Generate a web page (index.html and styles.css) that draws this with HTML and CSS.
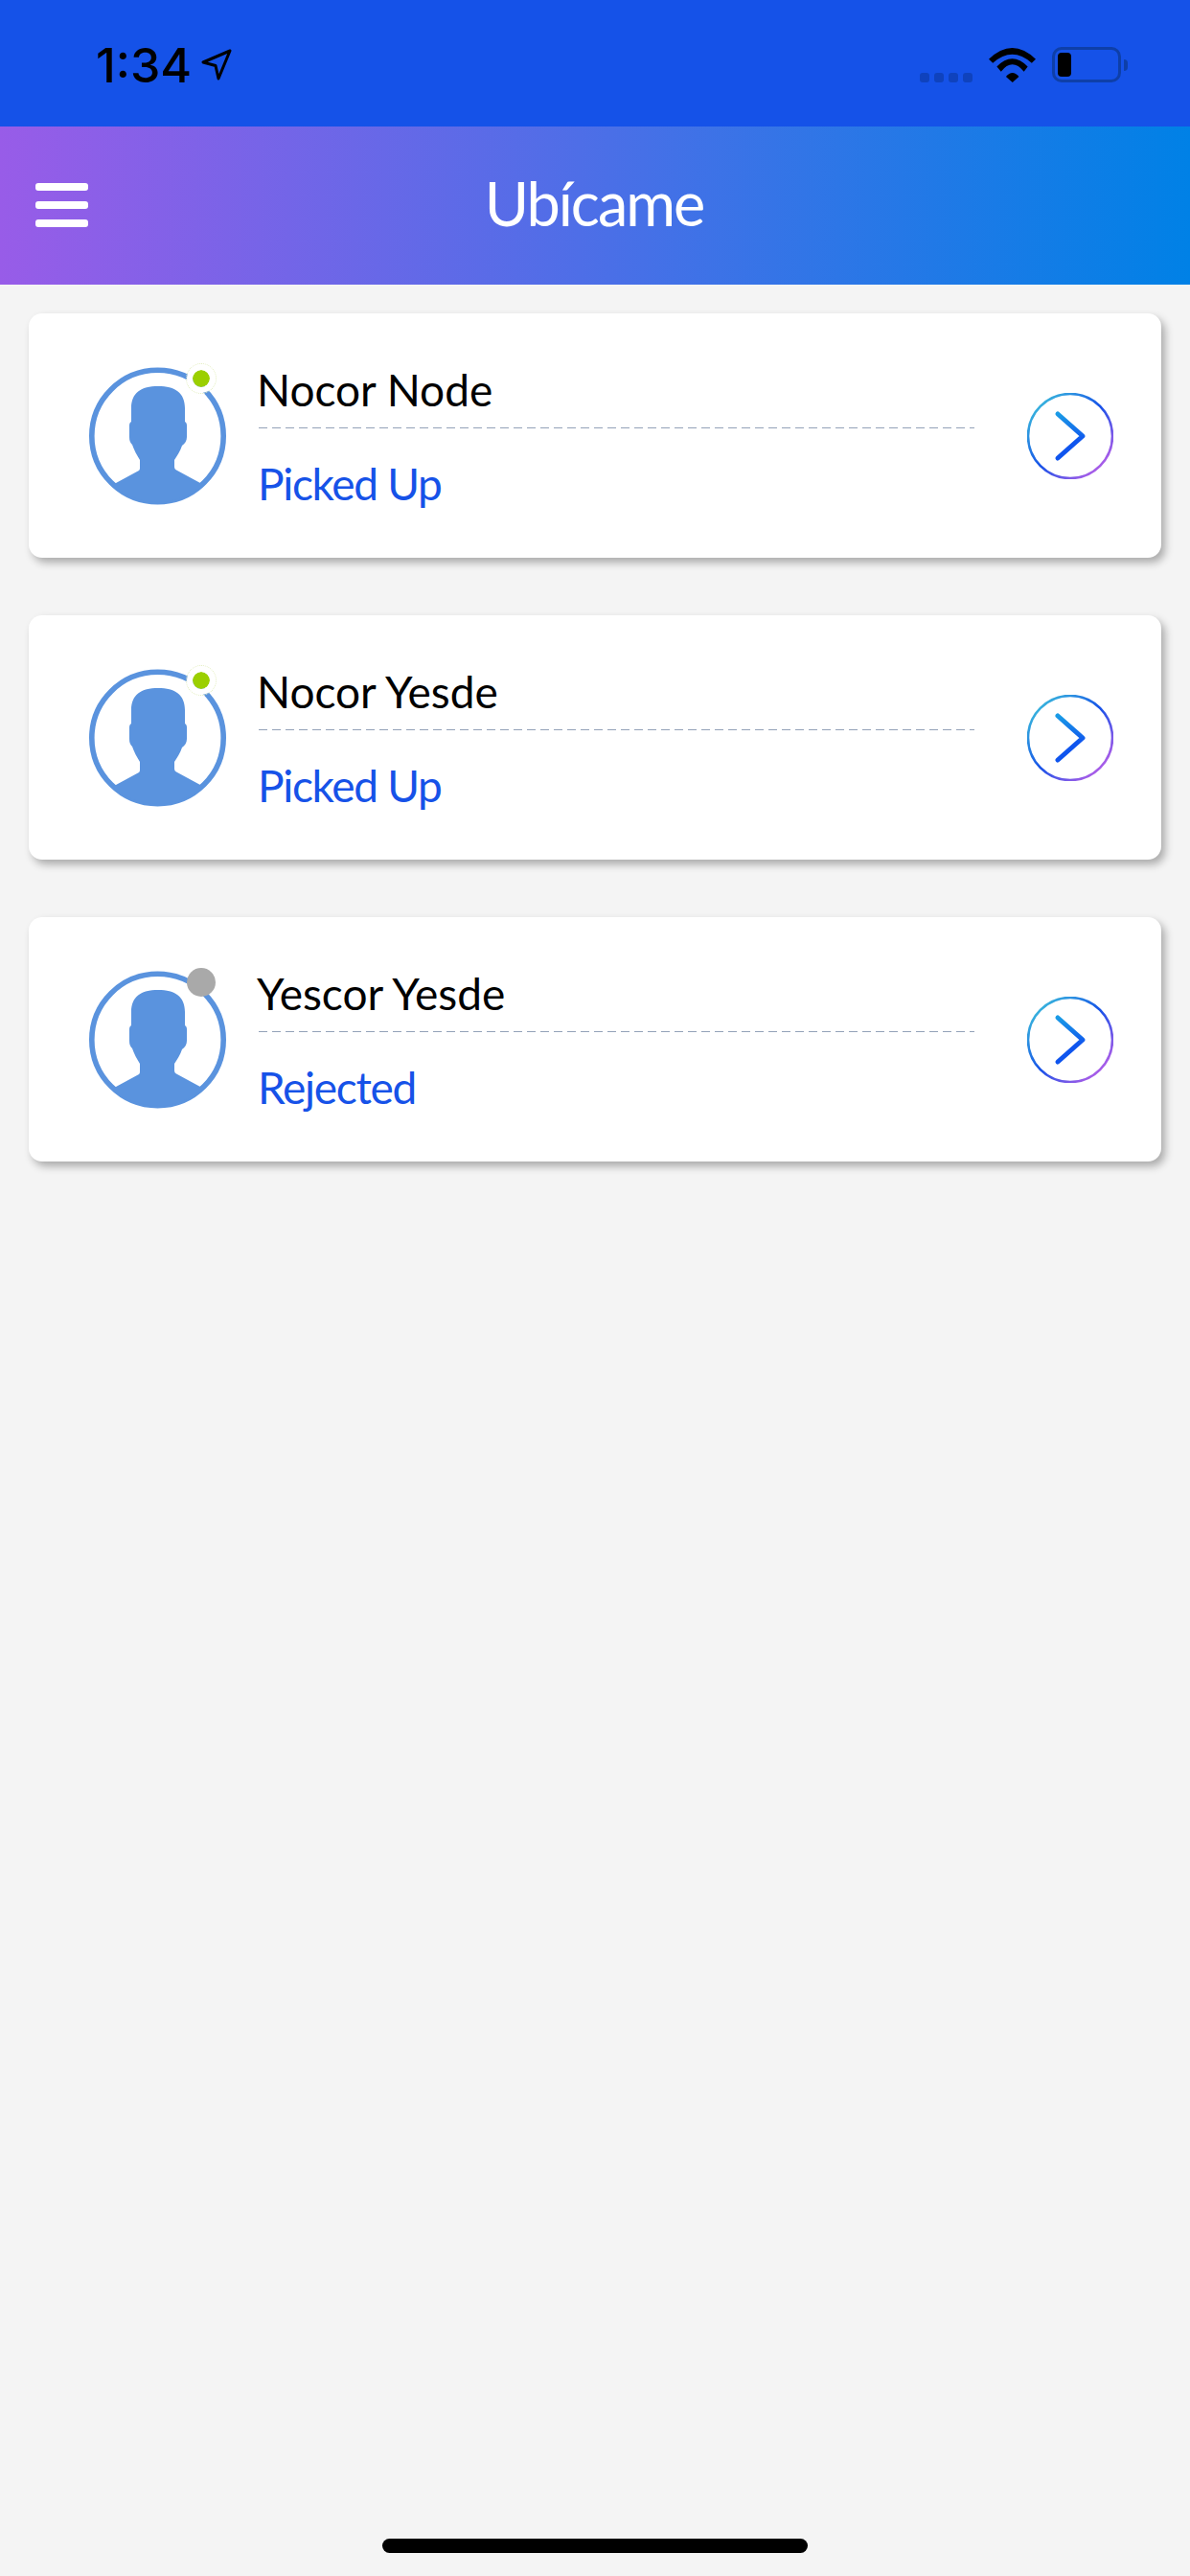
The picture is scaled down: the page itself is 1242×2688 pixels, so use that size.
FILE: index.html
```html
<!DOCTYPE html>
<html lang="es">
<head>
    <meta charset="UTF-8">
    <meta name="viewport" content="width=device-width, initial-scale=1.0">
    <title>Ubícame</title>
    <link rel="stylesheet" href="styles.css">
</head>
<body>
    <svg class="defs" width="0" height="0">
        <defs>
            <linearGradient id="ringGrad" x1="0" y1="0" x2="1" y2="1">
                <stop offset="0.1" stop-color="#3ab9dc"/>
                <stop offset="0.5" stop-color="#1652e8"/>
                <stop offset="0.85" stop-color="#a55ce8"/>
            </linearGradient>
            <linearGradient id="chevGrad" x1="0" y1="0" x2="0" y2="1">
                <stop offset="0" stop-color="#1a9be6"/>
                <stop offset="0.6" stop-color="#0f55ee"/>
            </linearGradient>
            <symbol id="person" viewBox="0 0 143 144">
                <circle cx="71.5" cy="72" r="68.7" fill="none" stroke="#5a93de" stroke-width="5.6"/>
                <path fill="#5a93de" d="M44 57V43C44 27 54 20 72 20C90 20 100 27 100 43V57C102 58 102 60 102 62V73C102 77 100 80 97 82C95 88 92 92 89 97V104C89 106 90 107 92 108L116 121L118 123A69 69 0 0 1 25 123L28 121L52 108C53 107 53 106 53 104V97C50 92 47 87 45 81C43 79 42 77 42 73V62C42 60 42 58 44 57Z"/>
            </symbol>
            <symbol id="go" viewBox="0 0 90 90">
                <circle cx="45" cy="45" r="44" fill="none" stroke="url(#ringGrad)" stroke-width="2.6"/>
                <path d="M32 22L58 45L32 68" fill="none" stroke="url(#chevGrad)" stroke-width="5" stroke-linecap="round" stroke-linejoin="round"/>
            </symbol>
        </defs>
    </svg>

    <div class="status-bar">
        <div class="status-left">
            <span class="time">1:34</span>
            <svg class="loc-arrow" width="36" height="35" viewBox="0 0 36 35">
                <path d="M32 3L4 15L17 18.5L20 32Z" fill="none" stroke="#000" stroke-width="3" stroke-linejoin="round"/>
            </svg>
        </div>
        <div class="status-right">
            <div class="signal"><i></i><i></i><i></i><i></i></div>
            <svg class="wifi" width="49" height="36" viewBox="0 0 41 36" preserveAspectRatio="none">
                <path d="M0 11.7Q20.5 -11.7 41 11.7L37.5 15.7Q20.5 -2.3 3.5 15.7Z"/>
                <path d="M7 19.5Q20.5 3.1 34 19.5L30.7 24.7Q20.5 9.9 10.7 24.7Z"/>
                <path d="M15 30Q20.7 22 26.3 30L20.7 36Z"/>
            </svg>
            <div class="battery"><div class="battery-level"></div></div>
            <div class="battery-nub"></div>
        </div>
    </div>

    <div class="header">
        <div class="menu-btn"><span></span><span></span><span></span></div>
        <h1 class="title">Ubícame</h1>
    </div>

    <div class="list">
        <div class="card">
            <div class="avatar">
                <svg width="143" height="144"><use href="#person"/></svg>
                <span class="dot dot-on"></span>
            </div>
            <div class="info">
                <div class="name">Nocor Node</div>
                <div class="state">Picked Up</div>
            </div>
            <svg class="go" width="90" height="90"><use href="#go"/></svg>
        </div>

        <div class="card">
            <div class="avatar">
                <svg width="143" height="144"><use href="#person"/></svg>
                <span class="dot dot-on"></span>
            </div>
            <div class="info">
                <div class="name">Nocor Yesde</div>
                <div class="state">Picked Up</div>
            </div>
            <svg class="go" width="90" height="90"><use href="#go"/></svg>
        </div>

        <div class="card">
            <div class="avatar">
                <svg width="143" height="144"><use href="#person"/></svg>
                <span class="dot dot-off"></span>
            </div>
            <div class="info">
                <div class="name">Yescor Yesde</div>
                <div class="state">Rejected</div>
            </div>
            <svg class="go" width="90" height="90"><use href="#go"/></svg>
        </div>
    </div>

    <div class="home-bar"></div>
</body>
</html>
```

FILE: styles.css
```css
body {
    margin: 0;
    height: 2688px;
    display: flex;
    flex-direction: column;
    background: #f4f4f4;
    font-family: Lato, "Open Sans", sans-serif;
}
.defs {
    position: absolute;
}
.status-bar {
    height: 132px;
    flex-shrink: 0;
    box-sizing: border-box;
    padding: 0 65px 46px 100px;
    display: flex;
    justify-content: space-between;
    align-items: flex-end;
    background: #1552e8;
}
.status-left {
    display: flex;
    align-items: flex-end;
    gap: 8px;
}
.time {
    font-family: Inter, sans-serif;
    font-size: 50px;
    font-weight: 500;
    line-height: 36px;
    color: #000;
}
.loc-arrow {
    margin-bottom: 1px;
}
.status-right {
    display: flex;
    align-items: flex-end;
}
.signal {
    display: flex;
    gap: 5px;
    margin-right: 17px;
}
.signal i {
    width: 10px;
    height: 10px;
    border-radius: 3px;
    background: #0f42bd;
}
.wifi {
    margin-right: 17px;
}
.battery {
    width: 72px;
    height: 37px;
    box-sizing: border-box;
    border: 3px solid #0e3fa8;
    border-radius: 10px;
    padding: 3px;
}
.battery-level {
    width: 14px;
    height: 100%;
    border-radius: 4px;
    background: #000;
}
.battery-nub {
    width: 4px;
    height: 12px;
    margin: 0 0 12px 3px;
    border-radius: 0 6px 6px 0;
    background: #0e3fa8;
}
.header {
    height: 165px;
    flex-shrink: 0;
    box-sizing: border-box;
    padding-bottom: 6px;
    position: relative;
    display: flex;
    align-items: center;
    justify-content: center;
    background: linear-gradient(90deg, #985ce8, #0081e6);
}
.menu-btn {
    position: absolute;
    left: 37px;
    top: 59px;
    width: 55px;
    display: flex;
    flex-direction: column;
    gap: 11px;
}
.menu-btn span {
    height: 8px;
    border-radius: 3px;
    background: #fff;
}
.title {
    margin: 0 2px 0 0;
    font-size: 63px;
    font-weight: 400;
    line-height: 1;
    letter-spacing: -2px;
    color: #fff;
}
.list {
    flex: 1;
    padding: 30px 30px 0;
    display: flex;
    flex-direction: column;
    gap: 60px;
}
.card {
    height: 255px;
    display: flex;
    align-items: center;
    padding-left: 63px;
    border-radius: 14px;
    background: #fff;
    box-shadow: 4px 5px 9px rgba(0, 0, 0, 0.3);
}
.avatar {
    position: relative;
    width: 143px;
    height: 144px;
    flex-shrink: 0;
}
.avatar svg {
    display: block;
}
.dot {
    position: absolute;
    left: 102px;
    top: -3px;
    width: 30px;
    height: 30px;
    box-sizing: border-box;
    border-radius: 50%;
}
.dot-on {
    border: 6px solid #fff;
    background: #9bcf00 content-box;
    outline: 1px dotted #e2edbd;
}
.dot-off {
    background: #a9a9a9;
}
.info {
    align-self: flex-start;
    width: 747px;
    margin: 55px 0 0 34px;
    flex-shrink: 0;
}
.name {
    font-size: 46px;
    line-height: 50px;
    height: 65px;
    text-indent: -2px;
    color: #000;
    background: repeating-linear-gradient(90deg, #93a2b8 0 9px, transparent 9px 14px) left bottom / 100% 1px no-repeat;
}
.state {
    margin-top: 33px;
    font-size: 46px;
    line-height: 50px;
    text-indent: -1px;
    letter-spacing: -1.3px;
    color: #1652e8;
}
.go {
    margin-left: 55px;
    flex-shrink: 0;
}
.home-bar {
    width: 444px;
    height: 15px;
    flex-shrink: 0;
    margin: 0 auto 24px;
    border-radius: 8px;
    background: #000;
}
```
